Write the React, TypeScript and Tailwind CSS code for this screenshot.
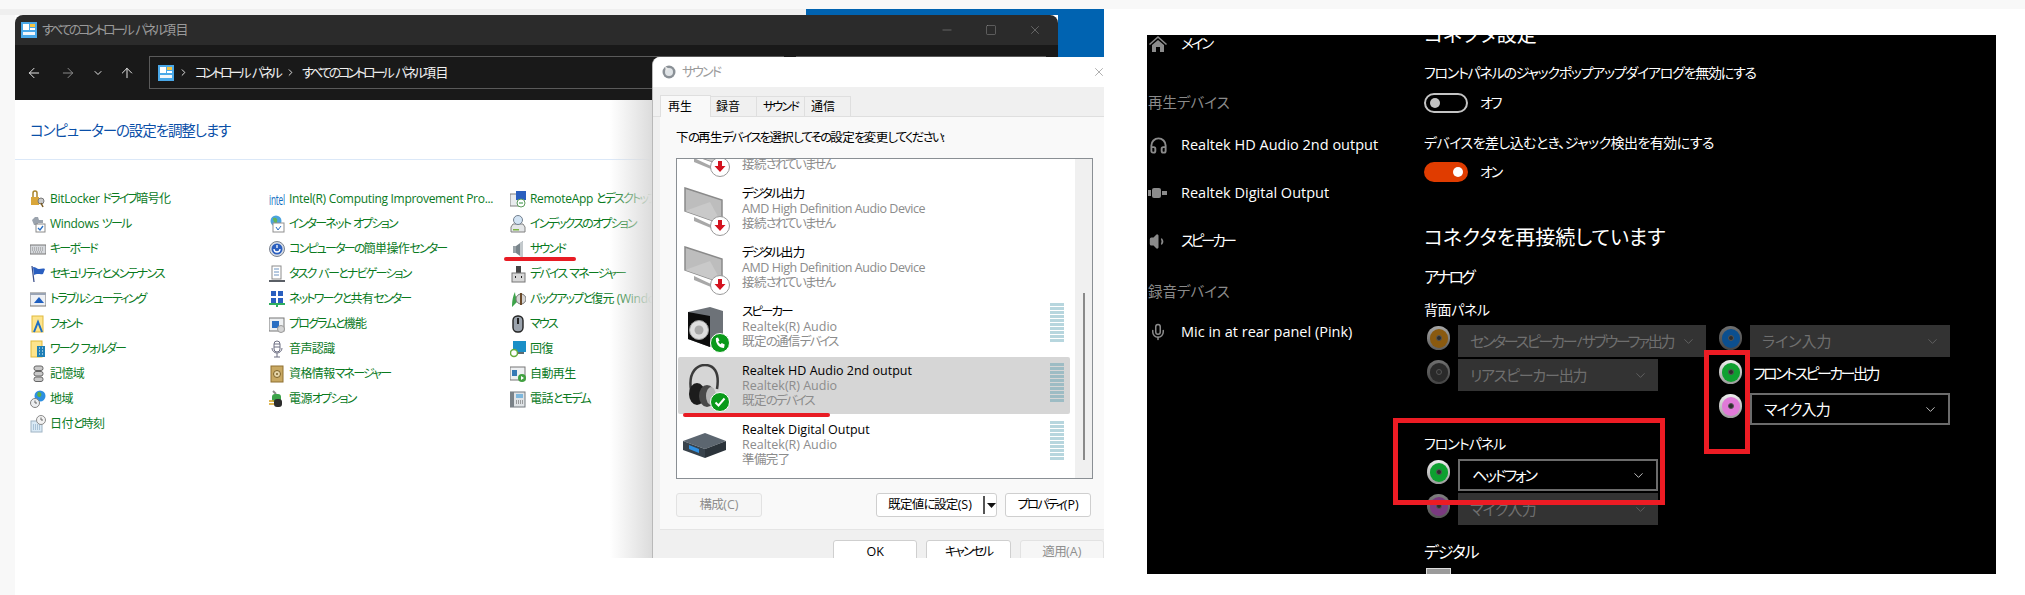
import React from 'react';
import { ArrowLeft, ArrowRight, ArrowUp, ChevronDown, ChevronRight, Minus, Square, X, Headphones, Volume1, Mic } from 'lucide-react';

const jp = "font-['Open_Sans','Noto_Sans_CJK_JP',sans-serif] [font-feature-settings:'palt']";

// the screenshot's Japanese font has much narrower kana than Noto, so tighten runs by script
const T = ({ text, tight }: { text: string; tight?: boolean }) => {
  const runs = text.match(/[\u3040-\u30ff]+|[\u4e00-\u9fff]+|[^\u3040-\u30ff\u4e00-\u9fff]+/g) ?? [];
  return (
    <>
      {runs.map((r, i) => {
        if (/^[\u3040-\u30ff]/.test(r)) return <span key={i} className={tight ? 'tracking-[-0.23em]' : 'tracking-[-0.15em]'}>{r}</span>;
        if (/^[\u4e00-\u9fff]/.test(r)) return <span key={i} className="tracking-[-0.05em]">{r}</span>;
        return <span key={i}>{r}</span>;
      })}
    </>
  );
};

const Ico = ({ children }: { children: React.ReactNode }) => (
  <svg width="16" height="18" viewBox="0 0 16 18" className="shrink-0">
    {children}
  </svg>
);

const icons: Record<string, React.ReactNode> = {
  lock: <><rect x="1" y="7" width="8" height="8" fill="#d9a63a" /><path d="M3 7V3a2 2 0 0 1 4 0v4" fill="none" stroke="#a8842e" strokeWidth="1.5" /><circle cx="11" cy="11" r="3" fill="#c9c9c9" stroke="#777" /><path d="M11 13l2 4" stroke="#7a5a20" strokeWidth="1.5" /></>,
  tools: <><path d="M2 5l3-3h3l1 3h4v3H8v2H4z" fill="#9ba3ad" /><rect x="6" y="9" width="9" height="8" fill="#fff" stroke="#8a8a8a" /><path d="M8 13l2 2 3-4" fill="none" stroke="#2b6fc2" strokeWidth="1.3" /></>,
  kb: <><rect x="0" y="5" width="16" height="9" fill="#d5d8dc" stroke="#767676" /><path d="M2 8h12M2 10h12M3 12h10" stroke="#8c8c8c" strokeDasharray="1 1" /></>,
  flag: <><path d="M2 1l2 16" stroke="#3a4e8a" strokeWidth="1.3" /><path d="M3 2c3 0 4 2 6 2s4-1 6 0l-2 5c-3 1-5-1-9 1z" fill="#2a5fc0" /></>,
  trouble: <><rect x="0" y="3" width="16" height="13" fill="#eef0f4" stroke="#767676" /><rect x="0" y="3" width="16" height="2" fill="#9aa4b4" /><path d="M4 13l5-6 5 6z" fill="#1f5fbf" /></>,
  font: <><rect x="2" y="1" width="11" height="16" fill="#fde48c" stroke="#e0b93c" /><path d="M4 17l4-10 4 10" fill="none" stroke="#1d6fc4" strokeWidth="2" /></>,
  work: <><rect x="1" y="1" width="11" height="16" fill="#fde48c" stroke="#e0b93c" /><rect x="7" y="6" width="8" height="11" fill="#1f7fb5" /><path d="M9 8h1M12 8h1M9 11h1M12 11h1M9 14h1M12 14h1" stroke="#fff" /></>,
  storage: <><rect x="4" y="1" width="9" height="4.5" rx="2" fill="#c9c9c9" stroke="#666" /><rect x="4" y="6.5" width="9" height="4.5" rx="2" fill="#c9c9c9" stroke="#666" /><rect x="4" y="12" width="9" height="4.5" rx="2" fill="#c9c9c9" stroke="#666" /></>,
  region: <><circle cx="10" cy="6" r="5.5" fill="#2d8fe0" /><path d="M8 2c3 0 4 2 3 4s-3 1-4-1z" fill="#59b04a" /><circle cx="5" cy="13" r="4.5" fill="#eceef0" stroke="#808080" /><path d="M5 10.5V13h2" stroke="#666" fill="none" /></>,
  date: <><rect x="1" y="6" width="11" height="11" fill="#d9e9f5" stroke="#a0b4c4" /><path d="M3 10h7M3 12h7M3 14h7" stroke="#7a9cb8" strokeDasharray="1 1" /><circle cx="11" cy="5" r="4.5" fill="#f2f2f2" stroke="#8a8a8a" /><path d="M11 2.5V5h2" stroke="#666" fill="none" /></>,
  intel: <text x="0" y="15" fontSize="15" textLength="16" lengthAdjust="spacingAndGlyphs" fill="#0f6cc0">intel</text>,
  ie: <><circle cx="7" cy="6" r="5.5" fill="#4aa3df" /><path d="M4 3c3-1 5 1 4 4S4 7 4 3z" fill="#65b556" /><rect x="4" y="8" width="11" height="9" fill="#fff" stroke="#8f8f8f" /><path d="M7 12l2 3 3-4" stroke="#2b6fc2" fill="none" /></>,
  access: <><circle cx="8" cy="9" r="7.5" fill="#d7dde6" stroke="#7a8290" /><circle cx="8" cy="9" r="5.5" fill="#2b5fbf" /><path d="M5 9a3 3 0 0 0 6 0M8 5v3" stroke="#fff" fill="none" strokeWidth="1.3" /></>,
  task: <><rect x="3" y="1" width="9" height="13" fill="#fff" stroke="#8c8c8c" /><path d="M5 4h5M5 7h5M5 10h5" stroke="#6c93c0" /><rect x="0" y="15" width="16" height="2" fill="#5a5f66" /></>,
  net: <><rect x="2" y="1" width="5" height="5" fill="#2a5fbf" /><rect x="9" y="1" width="5" height="5" fill="#2a5fbf" /><rect x="2" y="8" width="5" height="5" fill="#2a5fbf" /><rect x="9" y="8" width="5" height="5" fill="#2a5fbf" /><path d="M0 14h16M8 13v4" stroke="#2fae5f" strokeWidth="2" /></>,
  prog: <><rect x="0" y="3" width="15" height="13" fill="#eef0f2" stroke="#777" /><rect x="3" y="6" width="7" height="7" fill="#2b6fc2" /><circle cx="12" cy="14" r="3.5" fill="#d5d5d5" stroke="#999" /></>,
  speech: <><rect x="5" y="1" width="6" height="11" rx="3" fill="#fff" stroke="#6d6f82" /><path d="M5 4h6M5 7h6M3 8a5 5 0 0 0 10 0M8 13v4M5 17h6" stroke="#6d6f82" fill="none" /></>,
  cred: <><rect x="2" y="1" width="12" height="16" fill="#c8a862" stroke="#8f7030" /><circle cx="8" cy="9" r="3.5" fill="#e6d5a8" stroke="#7c6228" /><circle cx="8" cy="9" r="1" fill="#7c6228" /></>,
  power: <><path d="M4 1l3 3" stroke="#8a8a8a" strokeWidth="2" /><rect x="3" y="4" width="9" height="8" rx="3" fill="#3da34a" /><rect x="5" y="9" width="8" height="8" rx="3" fill="#2c2c2c" /><path d="M0 11h5M0 14h5" stroke="#d6a322" strokeWidth="1.5" /></>,
  remote: <><rect x="0" y="4" width="10" height="12" fill="#e9ebee" stroke="#808080" /><rect x="6" y="1" width="10" height="9" fill="#2a5fbf" /><circle cx="11" cy="13" r="4" fill="#fff" stroke="#5b9a5b" /><path d="M9 13h4" stroke="#2f8f3f" /></>,
  index: <><path d="M1 12l2-3h10l2 3v5H1z" fill="#e4e6e8" stroke="#808080" /><circle cx="8" cy="5" r="4.5" fill="#d3e4f4" stroke="#737f8e" /><rect x="3" y="14" width="6" height="1.5" fill="#7cb342" /></>,
  sound: <><path d="M3 6h3v7H3z" fill="#9aa3a8" /><path d="M6 6l7-5v17l-7-5z" fill="#79858b" /><path d="M10 3l3-2v17l-3-2z" fill="#c3c9cc" /></>,
  device: <><rect x="6" y="1" width="5" height="7" fill="#444" /><rect x="2" y="8" width="13" height="9" fill="#d7d7d7" stroke="#777" /><path d="M5 12h1M11 12h1" stroke="#222" strokeWidth="2" /></>,
  backup: <><path d="M2 17c0-7 1-11 3-15 0 4 2 6 2 10" fill="#3da34a" /><circle cx="11" cy="9" r="5" fill="#d5d5d5" stroke="#777" /><path d="M11 3v12" stroke="#6a4a2a" strokeWidth="2" /></>,
  mouse: <><rect x="3" y="1" width="10" height="16" rx="4.5" fill="#9ba3ad" stroke="#222" strokeWidth="1.4" /><rect x="7" y="3" width="2" height="6" fill="#222" /></>,
  recovery: <><rect x="3" y="1" width="13" height="11" fill="#1a8fc7" /><rect x="5" y="12" width="9" height="2" fill="#5f6b70" /><circle cx="4" cy="13" r="3.5" fill="#fff" stroke="#67ad3d" strokeWidth="1.5" /></>,
  autoplay: <><rect x="0" y="2" width="15" height="13" fill="#eef0f2" stroke="#777" /><rect x="2" y="5" width="5" height="6" fill="#3579b5" /><circle cx="12" cy="13" r="4" fill="#41a040" /><path d="M11 11v4l3-2z" fill="#fff" /></>,
  phone: <><rect x="0" y="2" width="15" height="15" fill="#dfe3e6" stroke="#73797e" /><rect x="0" y="2" width="4" height="15" fill="#7a8288" /><rect x="6" y="4" width="7" height="4" fill="#7db7dd" /><path d="M6 11h7M6 13h7" stroke="#555" strokeDasharray="1 1" /></>,
};

const cpItems: [string, string][] = [
  ['lock', 'BitLocker ドライブ暗号化'],
  ['intel', 'Intel(R) Computing Improvement Pro...'],
  ['remote', 'RemoteApp とデスクトップ接続'],
  ['tools', 'Windows ツール'],
  ['ie', 'インターネット オプション'],
  ['index', 'インデックスのオプション'],
  ['kb', 'キーボード'],
  ['access', 'コンピューターの簡単操作センター'],
  ['sound', 'サウンド'],
  ['flag', 'セキュリティとメンテナンス'],
  ['task', 'タスク バーとナビゲーション'],
  ['device', 'デバイス マネージャー'],
  ['trouble', 'トラブルシューティング'],
  ['net', 'ネットワークと共有センター'],
  ['backup', 'バックアップと復元 (Windows 7)'],
  ['font', 'フォント'],
  ['prog', 'プログラムと機能'],
  ['mouse', 'マウス'],
  ['work', 'ワーク フォルダー'],
  ['speech', '音声認識'],
  ['recovery', '回復'],
  ['storage', '記憶域'],
  ['cred', '資格情報マネージャー'],
  ['autoplay', '自動再生'],
  ['region', '地域'],
  ['power', '電源オプション'],
  ['phone', '電話とモデム'],
  ['date', '日付と時刻'],
];

const CpanelIcon = () => (
  <svg width="16" height="16" viewBox="0 0 16 16" className="shrink-0">
    <rect width="16" height="16" fill="#4aa8e8" />
    <rect x="2" y="2" width="6" height="6" fill="#fff" />
    <rect x="9" y="2" width="5" height="3" fill="#f5c542" />
    <rect x="9" y="6" width="5" height="2" fill="#fff" />
    <rect x="2" y="10" width="12" height="3" fill="#f2f6fa" />
  </svg>
);

const Monitor = () => (
  <svg width="42" height="46" viewBox="0 0 42 46">
    <path d="M1 2l37 12v24L1 25z" fill="#bdbdbd" stroke="#8a8a8a" strokeWidth="1.5" />
    <path d="M1 25l25-9 12 22z" fill="#c9c9c9" />
    <path d="M10 31l17 8v3l-17-7z" fill="#a8a8a8" />
  </svg>
);

const Speaker = () => (
  <svg width="38" height="42" viewBox="0 0 38 42" className="ml-[2px]">
    <path d="M2 6l22-5 13 4v28l-13 8L2 33z" fill="#6d7278" />
    <path d="M2 6l22 4v31L2 33z" fill="#0c0c0c" />
    <circle cx="13" cy="24" r="9.5" fill="#dedede" stroke="#9a9a9a" />
    <circle cx="13" cy="24" r="4.5" fill="#a9a9a9" />
  </svg>
);

const Phones = () => (
  <svg width="34" height="44" viewBox="0 0 34 44" className="ml-[4px]">
    <path d="M3 26C0 7 10 1 17 1c8 0 15 6 12 24" fill="none" stroke="#3b3b3b" strokeWidth="2.5" />
    <ellipse cx="9" cy="30" rx="8" ry="11" fill="#1c1c1c" />
    <ellipse cx="19" cy="32" rx="8" ry="11" fill="#4a4a4a" />
    <ellipse cx="23" cy="32" rx="5" ry="9" fill="#b5b5b5" />
  </svg>
);

const Receiver = () => (
  <svg width="44" height="28" viewBox="0 0 44 28" className="-ml-[1px]">
    <path d="M0 10L22 2l21 8-21 8z" fill="#5c6670" />
    <path d="M0 10l22 8v9L0 19z" fill="#38424b" />
    <path d="M22 18l21-8v9l-21 8z" fill="#2b333a" />
    <path d="M6 14l10 4v4L6 18z" fill="#2f8fe0" />
  </svg>
);

const Badge = ({ kind }: { kind: 'down' | 'phone' | 'check' }) => {
  if (kind === 'down') {
    return (
      <div className="absolute left-[26px] top-[30px] w-[20px] h-[20px] rounded-full bg-white border border-[#9a9a9a] flex items-center justify-center">
        <svg width="12" height="12" viewBox="0 0 12 12"><path d="M4 0h4v5h3.5L6 11 .5 5H4z" fill="#d3131f" /></svg>
      </div>
    );
  }
  return (
    <div className="absolute left-[26px] top-[29px] w-[20px] h-[20px] rounded-full bg-[#0a9a1a] border border-white flex items-center justify-center">
      {kind === 'check' ? (
        <svg width="12" height="12" viewBox="0 0 12 12"><path d="M1.5 6.5l3 3 6-7" fill="none" stroke="#fff" strokeWidth="2" /></svg>
      ) : (
        <svg width="12" height="12" viewBox="0 0 12 12"><path d="M2 1l2-.5 1.5 3-1.3 1c.5 1.300 1.300 2.200 2.500 2.800l1-1.300 3 1.500L10 11C5 11 1 6 2 1z" fill="#fff" /></svg>
      )}
    </div>
  );
};

const Level = ({ dark }: { dark?: boolean }) => (
  <div className="flex flex-col gap-px w-[14px] shrink-0 self-start mt-[6px]">
    {Array.from({ length: 10 }).map((_, i) => (
      <div key={i} className={dark ? 'h-[3px] bg-[#9dbcc4]' : 'h-[3px] bg-[#b7d6de]'} />
    ))}
  </div>
);

const DeviceRow = ({
  icon,
  badge,
  name,
  sub,
  status,
  selected,
  level,
}: {
  icon: React.ReactNode;
  badge: 'down' | 'phone' | 'check' | null;
  name: string;
  sub: string;
  status: string;
  selected?: boolean;
  level?: boolean;
}) => (
  <div className={`flex items-center pl-[6px] pr-[6px] rounded-[2px] whitespace-nowrap ${selected ? 'h-[57px] my-px bg-[#d6d6d6]' : 'h-[59px]'}`}>
    <div className="relative w-[58px] h-[46px] shrink-0 flex items-center">{icon}{badge && <Badge kind={badge} />}</div>
    <div className="flex-1 text-[12.5px] leading-[15px]">
      <div className="text-black"><T text={name} /></div>
      <div className={`text-[#8c8c8c] ${sub.startsWith('AMD') ? 'tracking-[-0.45px]' : ''}`}>{sub}</div>
      <div className="text-[#8c8c8c]"><T text={status} /></div>
    </div>
    {level && <Level dark={selected} />}
  </div>
);

const Jack = ({ ring, color }: { ring: string; color: string }) => (
  <div className={`w-[23px] h-[24px] mt-[1px] rounded-full shrink-0 flex items-center justify-center bg-linear-to-b ${ring}`}>
    <div className={`w-[18px] h-[19px] rounded-full flex items-center justify-center ${color}`}>
      <div className="w-[6px] h-[6px] rounded-full bg-[#2c2c2c] border border-[#555]" />
    </div>
  </div>
);

const Drop = ({ label, active, className }: { label: string; active?: boolean; className: string }) => (
  <div className={`h-[32px] flex items-center justify-between pl-[12px] pr-[10px] text-[15px] whitespace-nowrap ${className} ${active ? 'border-2 border-[#6b6b6b] text-white' : 'bg-[#333333] text-[#6f6f6f]'}`}>
    <span>{label}</span>
    <ChevronDown size={15} strokeWidth={1.2} className="shrink-0" />
  </div>
);

const SideRow = ({ icon, label, tight }: { icon: React.ReactNode; label: string; tight?: string }) => (
  <div className="h-[48px] flex items-center gap-[13px] text-white text-[14.5px] whitespace-nowrap">
    <div className="w-[20px] flex justify-center text-[#8b8b8b]">{icon}</div>
    <span className={tight}>{label}</span>
  </div>
);

const Btn = ({ label, disabled, width }: { label: string; disabled?: boolean; width: string }) => (
  <div className={`h-[24px] flex items-center justify-center rounded-[3px] border text-[12.5px] whitespace-nowrap ${width} ${disabled ? 'border-[#e2e2e2] text-[#8f8f8f] bg-[#f6f6f6]' : 'border-[#cfcfcf] text-black bg-white'}`}>
    <T text={label} />
  </div>
);

export default function App() {
  return (
    <div className={`w-[2025px] h-[595px] overflow-hidden bg-white flex flex-col ${jp}`}>
      <div className="h-[9px] bg-[#f8f8f8] shrink-0" />
      <div className="flex-1 flex">
        {/* left screenshot */}
        <div className="relative w-[1104px] h-[586px] shrink-0 flex flex-col">
          <div className="h-[6px] flex shrink-0">
            <div className="w-[806px] bg-[#efefef]" />
            <div className="flex-1 bg-[#0063b1]" />
          </div>
          <div className="flex-1 flex">
            <div className="w-[15px] bg-[#f8f8f8]" />
            <div className="w-[1043px] flex flex-col">
              <div className="h-[30px] bg-[#2b2b2b] rounded-t-[8px] flex items-center pl-[6px] pr-[16px] text-[13px] text-[#9a9a9a] whitespace-nowrap">
                <CpanelIcon />
                <span className="ml-[5px]"><T text="すべてのコントロール パネル項目" tight /></span>
                <div className="ml-auto flex items-center gap-[31px] text-[#8f8f8f]">
                  <Minus size={14} strokeWidth={1} />
                  <Square size={12} strokeWidth={1} />
                  <X size={14} strokeWidth={1} />
                </div>
              </div>
              <div className="h-[55px] bg-[#191919] flex items-center pl-[11px] pr-[12px] text-[#e6e6e6]">
                <ArrowLeft size={16} strokeWidth={1.5} />
                <ArrowRight size={16} strokeWidth={1.5} className="ml-[18px] text-[#8a8a8a]" />
                <ChevronDown size={12} strokeWidth={2} className="ml-[16px]" />
                <ArrowUp size={16} strokeWidth={1.5} className="ml-[15px]" />
                <div className="ml-[14px] w-[635px] h-[33px] border border-[#5a5a5a] flex items-center pl-[8px] text-[13px] text-[#f0f0f0] whitespace-nowrap">
                  <CpanelIcon />
                  <ChevronRight size={11} className="ml-[4px] mr-[6px] shrink-0" />
                  <span className="w-[90px] shrink-0"><T text="コントロール パネル" tight /></span>
                  <ChevronRight size={11} className="mr-[6px] shrink-0" />
                  <span><T text="すべてのコントロール パネル項目" tight /></span>
                </div>
                <div className="ml-[12px] flex-1 h-[33px] border border-[#5a5a5a]" />
              </div>
              <div className="flex-1 bg-white">
                <div className="h-[60px] border-b border-[#dbe8f8] flex items-center pl-[15px] pt-[3px] text-[14.5px] tracking-[-1.1px] text-[#0a4fa8]">
                  コンピューターの設定を調整します
                </div>
                <div className="pl-[15px] pt-[26px] grid grid-cols-[239px_241px_1fr] auto-rows-[25px] text-[12px] tracking-[-0.3px] text-[#0a7a1e]">
                  {cpItems.map(([icon, label], i) => (
                    <div key={i} className="flex items-center gap-[4px] whitespace-nowrap">
                      <Ico>{icons[icon]}</Ico>
                      <span><T text={label} /></span>
                    </div>
                  ))}
                </div>
              </div>
            </div>
            <div className="flex-1 flex flex-col">
              <div className="h-[42px] bg-[#0063b1]" />
              <div className="flex-1 bg-white" />
            </div>
          </div>

          {/* red mark under サウンド */}
          <div className="absolute left-[504px] top-[248px] w-[72px] h-[4px] bg-[#e81c24] rounded-full" />

          {/* shading that the dialog throws on the window */}
          <div className="absolute left-[610px] top-[91px] w-[42px] h-[458px] bg-linear-to-r from-transparent to-[#dcdcdc]" />

          {/* sound dialog */}
          <div className="absolute left-[652px] top-[48px] w-[452px] h-[501px] bg-[#f0f0f0] rounded-tl-[8px] border-l border-[#b9b9b9] flex flex-col overflow-hidden">
            <div className="h-[30px] bg-white flex items-center pl-[9px] text-[13px] text-[#9b9b9b] shrink-0">
              <svg width="14" height="14" viewBox="0 0 14 14"><circle cx="7" cy="7" r="6.500" fill="#8a9096" /><circle cx="7" cy="7" r="4" fill="#dfe3e6" /><path d="M3 1l4 3-3 3z" fill="#e8e8e8" /></svg>
              <span className="ml-[6px]"><T text="サウンド" /></span>
              <X size={14} strokeWidth={1} className="ml-auto mr-[-2px] text-[#777]" />
            </div>
            <div className="pl-[7px] h-[30px] flex items-end text-[12px] text-black shrink-0 border-b border-[#dfdfdf] whitespace-nowrap">
              <div className="w-[51px] h-[22px] bg-[#f9f9f9] border border-b-0 border-[#dfdfdf] pl-[7px] flex items-center -mb-px">再生</div>
              <div className="w-[46px] h-[20px] border-r border-t border-[#dfdfdf] flex items-center pl-[5px]">録音</div>
              <div className="w-[48px] h-[20px] border-r border-t border-[#dfdfdf] flex items-center pl-[6px]"><T text="サウンド" /></div>
              <div className="w-[46px] h-[20px] border-r border-t border-[#dfdfdf] flex items-center pl-[6px]">通信</div>
            </div>
            <div className="ml-[7px] h-[413px] shrink-0 bg-[#f9f9f9] pl-[16px] border-b border-[#e5e5e5]">
              <div className="h-[41px] flex items-center text-[12.5px] text-black pt-[2px] whitespace-nowrap"><span><T text="下の再生デバイスを選択してその設定を変更してください:" /></span></div>
              <div className="relative w-[417px] h-[321px] bg-white border border-[#8a8f94] overflow-hidden">
                <div className="absolute right-0 top-0 w-[17px] h-full bg-[#f0f0f0] flex justify-center">
                  <div className="w-[2px] h-[167px] mt-[134px] bg-[#8a8a8a]" />
                </div>
                <div className="pl-[1px] w-[393px] -mt-[39px]">
                  <DeviceRow icon={<Monitor />} badge="down" name="デジタル出力" sub="AMD High Definition Audio Device" status="接続されていません" />
                  <DeviceRow icon={<Monitor />} badge="down" name="デジタル出力" sub="AMD High Definition Audio Device" status="接続されていません" />
                  <DeviceRow icon={<Monitor />} badge="down" name="デジタル出力" sub="AMD High Definition Audio Device" status="接続されていません" />
                  <DeviceRow icon={<Speaker />} badge="phone" name="スピーカー" sub="Realtek(R) Audio" status="既定の通信デバイス" level />
                  <DeviceRow icon={<Phones />} badge="check" name="Realtek HD Audio 2nd output" sub="Realtek(R) Audio" status="既定のデバイス" selected level />
                  <DeviceRow icon={<Receiver />} badge={null} name="Realtek Digital Output" sub="Realtek(R) Audio" status="準備完了" level />
                </div>
              </div>
              <div className="mt-[14px] flex items-center">
                <Btn label="構成(C)" disabled width="w-[86px]" />
                <div className="ml-[114px] w-[121px] h-[24px] rounded-[3px] border border-[#cfcfcf] bg-white flex items-center text-[12.5px] text-black whitespace-nowrap">
                  <span className="w-[106px] text-center"><T text="既定値に設定(S)" /></span>
                  <div className="w-[2px] h-[18px] bg-[#555]" />
                  <svg width="9" height="5" viewBox="0 0 9 5" className="ml-[2px]"><path d="M0 0h9L4.500 5z" fill="#111" /></svg>
                </div>
                <Btn label="プロパティ(P)" width="w-[86px] ml-[8px]" />
              </div>
            </div>
            <div className="pl-[180px] pt-[10px] flex gap-[9px]">
              <Btn label="OK" width="w-[85px]" />
              <Btn label="キャンセル" width="w-[85px]" />
              <Btn label="適用(A)" disabled width="w-[85px]" />
            </div>
          </div>
          {/* red mark under the selected device */}
          <div className="absolute left-[683px] top-[404px] w-[147px] h-[4px] bg-[#e81c24] rounded-full" />
        </div>

        {/* right screenshot */}
        <div className="flex-1 pt-[26px] pl-[43px]">
          <div className="relative w-[849px] h-[539px] bg-black text-white flex overflow-hidden">
            <div className="w-[277px] shrink-0 pl-[1px] -mt-[15px]">
              <SideRow
                icon={<svg width="18" height="18" viewBox="0 0 18 18"><path d="M9 1L0 9l1 1 8-7 8 7 1-1z" fill="#8b8b8b" /><path d="M3 10l6-5 6 5v7h-4v-5H7v5H3z" fill="#8b8b8b" /></svg>}
                label="メイン"
                tight="tracking-[-0.18em]"
              />
              <div className="h-[53px] flex items-end pb-[8px] text-[14.5px] leading-[20px] text-[#8a8a8a]">再生デバイス</div>
              <SideRow icon={<Headphones size={19} strokeWidth={2.4} />} label="Realtek HD Audio 2nd output" />
              <SideRow
                icon={<svg width="20" height="10" viewBox="0 0 20 10"><rect x="0" y="2" width="3" height="6" fill="#8b8b8b" /><rect x="4" y="0" width="9" height="10" rx="2" fill="#8b8b8b" /><rect x="14" y="3" width="5" height="4" fill="#8b8b8b" /></svg>}
                label="Realtek Digital Output"
              />
              <SideRow icon={<Volume1 size={19} fill="#8b8b8b" />} label="スピーカー" tight="tracking-[-0.22em]" />
              <div className="h-[37px] flex items-end text-[14.5px] leading-[20px] text-[#8a8a8a]">録音デバイス</div>
              <div className="mt-[6px]">
                <SideRow icon={<Mic size={18} />} label="Mic in at rear panel (Pink)" />
              </div>
            </div>
            <div className="flex-1 -mt-[14px] whitespace-nowrap">
              <div className="text-[20px] leading-[28px]">コネクタ設定</div>
              <div className="mt-[14px] text-[14px] leading-[20px] tracking-[-0.09em]">フロントパネルのジャックポップアップダイアログを無効にする</div>
              <div className="mt-[9px] flex items-center gap-[12px] text-[14px]">
                <div className="w-[44px] h-[20px] rounded-full border-2 border-[#c4c4c4] flex items-center pl-[4px]">
                  <div className="w-[10px] h-[10px] rounded-full bg-[#c4c4c4]" />
                </div>
                <span className="tracking-[-0.15em]">オフ</span>
              </div>
              <div className="mt-[20px] text-[14px] leading-[20px] tracking-[-0.04em]">デバイスを差し込むとき、ジャック検出を有効にする</div>
              <div className="mt-[8px] flex items-center gap-[12px] text-[14px]">
                <div className="w-[44px] h-[20px] rounded-full bg-[#e03c00] flex items-center justify-end pr-[5px]">
                  <div className="w-[10px] h-[10px] rounded-full bg-white" />
                </div>
                <span className="tracking-[-0.15em]">オン</span>
              </div>
              <div className="mt-[41px] text-[20px] leading-[30px]">コネクタを再接続しています</div>
              <div className="mt-[12px] text-[16px] leading-[24px] tracking-[-0.17em]">アナログ</div>
              <div className="mt-[11px] text-[14px] leading-[20px] tracking-[-0.03em]">背面パネル</div>
              <div className="mt-[5px] flex">
                <div className="w-[282px] pl-[3px] flex flex-col gap-[2px]">
                  <div className="flex items-start gap-[8px]"><Jack ring="from-[#a8a8a8] to-[#5c5c5c]" color="bg-[#8a5a10]" /><Drop label="センタースピーカー / サブウーファ出力" className="w-[248px] shrink-0 tracking-[-0.15em]" /></div>
                  <div className="flex items-start gap-[8px]"><Jack ring="from-[#707070] to-[#444]" color="bg-[#2a2a2a]" /><Drop label="リアスピーカー出力" className="w-[200px] tracking-[-0.08em]" /></div>
                </div>
                <div className="ml-[13px] flex flex-col gap-[2px]">
                  <div className="flex items-start gap-[8px]"><Jack ring="from-[#707070] to-[#444]" color="bg-[#0b4f8f]" /><Drop label="ライン入力" className="w-[200px]" /></div>
                  <div className="flex items-start h-[32px] gap-[11px] text-[15px]">
                    <Jack ring="from-[#f0f0f0] to-[#9a9a9a]" color="bg-[#0ea030]" />
                    <span className="mt-[3px] tracking-[-0.17em]">フロントスピーカー出力</span>
                  </div>
                  <div className="flex items-start gap-[8px]"><Jack ring="from-[#f0f0f0] to-[#9a9a9a]" color="bg-[#e07ad8]" /><Drop label="マイク入力" active className="w-[200px] tracking-[-0.05em]" /></div>
                </div>
              </div>
              <div className="mt-[9px] text-[14px] leading-[20px] tracking-[-0.07em]">フロントパネル</div>
              <div className="mt-[5px] pl-[3px] flex flex-col gap-[2px]">
                <div className="flex items-start gap-[8px]"><Jack ring="from-[#f0f0f0] to-[#9a9a9a]" color="bg-[#0ea030]" /><Drop label="ヘッドフォン" active className="w-[200px] tracking-[-0.14em]" /></div>
                <div className="flex items-start gap-[8px]"><Jack ring="from-[#808080] to-[#555]" color="bg-[#7a3a80]" /><Drop label="マイク入力" className="w-[200px] tracking-[-0.05em]" /></div>
              </div>
              <div className="mt-[15px] text-[16px] leading-[24px] tracking-[-0.08em]">デジタル</div>
              <div className="mt-[4px] ml-[2px] w-[25px] h-[20px] bg-[#9a9a9a] border border-[#ddd]" />
            </div>
            {/* red call-outs */}
            <div className="absolute left-[246px] top-[383px] w-[272px] h-[87px] border-[5px] border-[#ed1c24]" />
            <div className="absolute left-[557px] top-[315px] w-[46px] h-[104px] border-[5px] border-[#ed1c24]" />
          </div>
        </div>
      </div>
    </div>
  );
}
